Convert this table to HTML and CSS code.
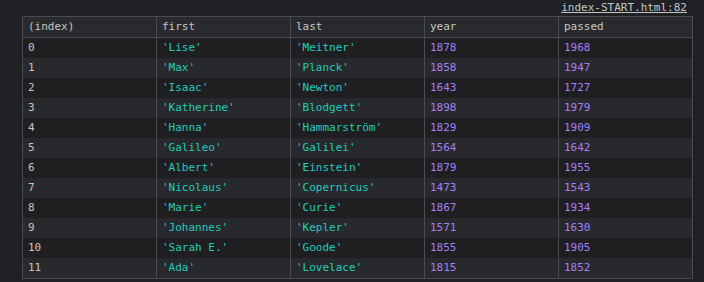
FILE: index.html
```html
<!doctype html>
<html lang="en">
<head>
    <meta charset="UTF-8">
    <title>console.table</title>
    <link rel="stylesheet" href="styles.css">
</head>
<body>
<div class="console-message">
    <div class="source-line"><a class="source-link" href="#">index-START.html:82</a></div>
    <table class="data-table">
        <thead>
        <tr><th>(index)</th><th>first</th><th>last</th><th>year</th><th>passed</th></tr>
        </thead>
        <tbody>
        <tr><td>0</td><td class="str">'Lise'</td><td class="str">'Meitner'</td><td class="num">1878</td><td class="num">1968</td></tr>
        <tr><td>1</td><td class="str">'Max'</td><td class="str">'Planck'</td><td class="num">1858</td><td class="num">1947</td></tr>
        <tr><td>2</td><td class="str">'Isaac'</td><td class="str">'Newton'</td><td class="num">1643</td><td class="num">1727</td></tr>
        <tr><td>3</td><td class="str">'Katherine'</td><td class="str">'Blodgett'</td><td class="num">1898</td><td class="num">1979</td></tr>
        <tr><td>4</td><td class="str">'Hanna'</td><td class="str">'Hammarström'</td><td class="num">1829</td><td class="num">1909</td></tr>
        <tr><td>5</td><td class="str">'Galileo'</td><td class="str">'Galilei'</td><td class="num">1564</td><td class="num">1642</td></tr>
        <tr><td>6</td><td class="str">'Albert'</td><td class="str">'Einstein'</td><td class="num">1879</td><td class="num">1955</td></tr>
        <tr><td>7</td><td class="str">'Nicolaus'</td><td class="str">'Copernicus'</td><td class="num">1473</td><td class="num">1543</td></tr>
        <tr><td>8</td><td class="str">'Marie'</td><td class="str">'Curie'</td><td class="num">1867</td><td class="num">1934</td></tr>
        <tr><td>9</td><td class="str">'Johannes'</td><td class="str">'Kepler'</td><td class="num">1571</td><td class="num">1630</td></tr>
        <tr><td>10</td><td class="str">'Sarah E.'</td><td class="str">'Goode'</td><td class="num">1855</td><td class="num">1905</td></tr>
        <tr><td>11</td><td class="str">'Ada'</td><td class="str">'Lovelace'</td><td class="num">1815</td><td class="num">1852</td></tr>
        </tbody>
    </table>
    <div class="next-line">▶ Array(12)</div>
</div>
</body>
</html>
```

FILE: styles.css
```css
body {
    margin: 0;
    background-color: #202124;
    color: #c4c7c5;
    font-family: "DejaVu Sans Mono", monospace;
    font-size: 11px;
    overflow: hidden;
}

.console-message {
    padding: 0 11px 0 22px;
}

.source-line {
    display: flex;
    justify-content: flex-end;
    height: 16px;
    line-height: 16px;
    padding-right: 6px;
}

.source-link {
    color: #c4c7c5;
    text-decoration: underline;
}

.data-table {
    width: 671px;
    table-layout: fixed;
    border-collapse: collapse;
    border: 1px solid #4a4b4e;
}

.data-table th,
.data-table td {
    height: 20px;
    padding: 0 5px;
    line-height: 20px;
    text-align: left;
    font-weight: normal;
    white-space: nowrap;
    border-left: 1px solid #4a4b4e;
}

.data-table th {
    background-color: #292a2d;
    border-bottom: 1px solid #4a4b4e;
    color: #c4c7c5;
}

.data-table tbody tr:nth-child(odd) {
    background-color: #1f1f22;
}

.data-table tbody tr:nth-child(even) {
    background-color: #28292c;
}

.data-table td {
    color: #c4c7c5;
}

.data-table td.str {
    color: #1dcdbd;
}

.data-table td.num {
    color: #a57ffa;
}

.next-line {
    padding: 2px 0 0 18px;
    line-height: 16px;
}
```
